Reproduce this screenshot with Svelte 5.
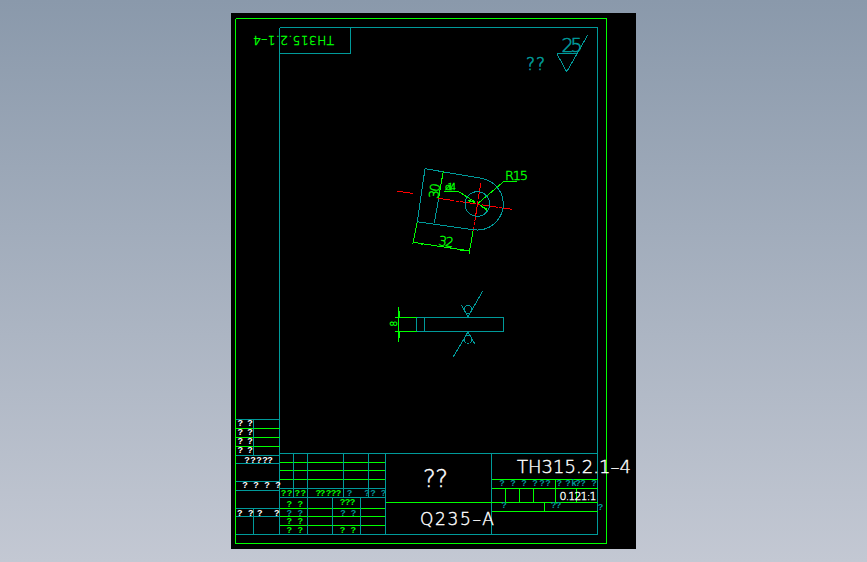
<script>
  const G = "#00ff00";
  const C = "#009a9a";
  const W = "#ffffff";

  // sheet lines as [x1, y1, x2, y2, colour], in page pixels
  const lines = [
    // outer and inner frame
    [235.5, 18.5, 606.5, 18.5, G], [606.5, 18.5, 606.5, 543.5, G], [606.5, 543.5, 235.5, 543.5, G], [235.5, 543.5, 235.5, 18.5, G],
    [279.5, 27.5, 597.5, 27.5, C], [597.5, 27.5, 597.5, 534.5, C], [597.5, 534.5, 235.5, 534.5, C], [279.5, 27.5, 279.5, 534.5, C],
    // upside-down code box
    [350.5, 27.5, 350.5, 53.5, C], [279.5, 53.5, 350.5, 53.5, C],
    // left table
    [235.5, 419.5, 279.5, 419.5, C], [235.5, 428.5, 279.5, 428.5, G], [235.5, 437.5, 279.5, 437.5, G], [235.5, 446.5, 279.5, 446.5, G],
    [235.5, 455.5, 279.5, 455.5, C], [235.5, 463.5, 279.5, 463.5, C], [235.5, 481.5, 279.5, 481.5, C], [235.5, 490.5, 279.5, 490.5, C],
    [235.5, 508.5, 279.5, 508.5, C], [235.5, 516.5, 279.5, 516.5, C],
    [253.5, 419.5, 253.5, 455.5, C], [253.5, 508.5, 253.5, 534.5, C],
    // middle table
    [279.5, 453.5, 597.5, 453.5, C], [279.5, 462.5, 385.5, 462.5, G], [279.5, 470.5, 385.5, 470.5, G], [279.5, 479.5, 385.5, 479.5, G],
    [279.5, 488.5, 385.5, 488.5, C], [279.5, 497.5, 385.5, 497.5, C], [279.5, 508.5, 385.5, 508.5, G], [279.5, 516.5, 385.5, 516.5, G],
    [279.5, 525.5, 385.5, 525.5, G],
    [293.5, 453.5, 293.5, 497.5, C], [307.5, 453.5, 307.5, 534.5, C], [343.5, 453.5, 343.5, 497.5, C], [368.5, 453.5, 368.5, 497.5, C],
    [332.5, 497.5, 332.5, 534.5, C], [360.5, 497.5, 360.5, 534.5, C], [385.5, 453.5, 385.5, 534.5, C],
    // title block, right side
    [491.5, 453.5, 491.5, 534.5, C], [385.5, 502.5, 597.5, 502.5, G],
    [491.5, 479.5, 597.5, 479.5, G], [491.5, 488.5, 597.5, 488.5, G], [491.5, 511.5, 597.5, 511.5, G],
    [505.5, 488.5, 505.5, 502.5, G], [519.5, 488.5, 519.5, 502.5, G], [533.5, 488.5, 533.5, 502.5, G],
    [555.5, 479.5, 555.5, 502.5, G], [576.5, 488.5, 576.5, 502.5, G], [544.5, 502.5, 544.5, 511.5, G],
    // part outline, top view
    [425, 168.7, 481.3, 178.3, C], [473.3, 229.7, 417.3, 221.7, C], [417.3, 221.7, 425, 168.7, C],
    [443.3, 171, 438.5, 199, G], [438.5, 199, 434.3, 223.3, C],
    // dimensions
    [417.3, 221.7, 412.7, 244.3, G], [473.3, 229.7, 469, 254, G], [413.3, 242.3, 470, 251, G],
    [504.3, 181, 516.7, 181, G], [504.3, 181, 477.3, 204, G],
    [444.3, 191, 457.7, 191, G], [457.7, 191, 475, 202, G], [480, 205, 488, 211, G],
    // part, side view
    [416.5, 317.5, 503.5, 317.5, C], [503.5, 317.5, 503.5, 331.5, C], [503.5, 331.5, 416.5, 331.5, C], [416.5, 331.5, 416.5, 317.5, C],
    [424.5, 317.5, 424.5, 331.5, C],
    [395, 317.5, 416.5, 317.5, G], [395, 331.5, 416.5, 331.5, G], [398.7, 307, 398.7, 341.7, G],
    // surface marks
    [461.3, 305, 468, 316.7, C], [468, 316.7, 482.7, 291, C],
    [468, 332, 475, 344.3, C], [468, 332, 453.3, 356.7, C],
    [556.7, 53.5, 577.7, 53.5, C], [556.7, 53.5, 566.7, 71.7, C], [566.7, 71.7, 587.7, 35, C]
  ];

  const redLines = [
    [397, 191, 414, 193.7],
    [438.3, 198.3, 511.7, 209.3],
    [480.7, 183.3, 473.3, 231]
  ];

  // solid arrow heads
  const heads = [
    "413.3,242.3 423,242.8 422.6,244.8",
    "470,251 460.5,248.5 460.2,250.5",
    "477,203.5 468.5,199.5 467.5,201",
    "480,205 487.5,208.5 486.5,210.5",
    "398,317.5 399.6,317.5 399.6,311 398,311",
    "398,331.5 399.6,331.5 399.6,338 398,338"
  ];

  // small placeholder marks in the tables: [colour, baseline y, x positions]
  const marks = [
    [W, 426, [240.3, 250]], [W, 435, [240.3, 250]], [W, 444, [240.3, 250]], [W, 453, [240.3, 250]],
    [W, 462.5, [247, 253, 259, 265, 270]],
    [W, 488, [245, 256, 267, 278]],
    [W, 515.5, [239.7, 250.7, 259.7, 276.7]],
    [G, 495.5, [283.6, 289.6, 297.3, 303.3, 318.3, 322.6, 328.6, 333.6, 338.6]],
    [C, 495.5, [349.6, 367, 373, 383.6]],
    [G, 507, [289.3, 300.3]], [G, 505, [342.6, 347.6, 352.6]],
    [C, 515.5, [289.3, 300.3, 343, 353.6]],
    [G, 524, [289.3, 300.3]],
    [G, 532.5, [289.3, 300.3, 342.6, 353.3]],
    [C, 485.5, [502, 513, 524, 535, 542, 548, 559.3, 568, 578, 583, 594]],
    [C, 508, [504, 553.5, 558.5]],
    [C, 509.5, [600.6]]
  ];
</script>

<div class="page">
  <div class="sheet">
    <svg viewBox="231 13 405 536" width="405" height="536" aria-label="Part drawing">
      {#each lines as [x1, y1, x2, y2, colour]}
        <line {x1} {y1} {x2} {y2} stroke={colour} />
      {/each}
      {#each redLines as [x1, y1, x2, y2]}
        <line {x1} {y1} {x2} {y2} stroke="#ff0000" stroke-dasharray="16 1.5 3 1.5" />
      {/each}
      <path d="M481.3 178.3A26 26 0 0 1 473.3 229.7" fill="none" stroke={C} />
      <circle cx="477.3" cy="204" r="12.3" fill="none" stroke={C} />
      <circle cx="468" cy="309.3" r="4" fill="none" stroke={C} />
      <circle cx="468" cy="339.3" r="4" fill="none" stroke={C} />
      {#each heads as points}
        <polygon {points} fill={G} />
      {/each}

      <text class="code" transform="translate(334 36) rotate(180)" textLength="81" fill={G} stroke={G}>TH315.2.1–4</text>
      <text class="rough" x="561.5" y="52" textLength="21" fill={C} stroke={C}>25</text>
      <text class="rough-q" x="526" y="70" textLength="19" fill={C} stroke={C}>??</text>

      <text class="dim" x="505" y="180" textLength="23" fill={G} stroke={G}>R15</text>
      <text class="dim-sm" x="445" y="190" textLength="11" fill={G} stroke={G}>ø14</text>
      <text class="dim" transform="translate(438 245) rotate(8.5)" textLength="15" fill={G} stroke={G}>32</text>
      <text class="dim" transform="translate(438 199) rotate(-82)" textLength="15" fill={G} stroke={G}>30</text>
      <text class="dim-sm" transform="translate(396.5 326.5) rotate(-90)" fill={G} stroke={G}>8</text>

      <text class="big" x="423" y="486.5" textLength="25" fill={W} stroke={W}>??</text>
      <text class="grade" x="420" y="525" textLength="74" fill={W} stroke={W}>Q235–A</text>
      <text class="drawing" x="517" y="473" textLength="114" fill={W} stroke={W}>TH315.2.1–4</text>
      <text class="scale" x="559.5" y="500" textLength="37" fill={W} stroke={W}>0.121:1</text>

      {#each marks as [colour, y, xs]}
        {#each xs as x}
          <text class="mark" {x} {y} fill={colour}>?</text>
        {/each}
      {/each}
      <text class="mark" x="574" y="485.5" fill={C}>k</text>
    </svg>
  </div>
</div>

<style>
  :global(body) {
    margin: 0;
  }

  .page {
    width: 867px;
    height: 562px;
    box-sizing: border-box;
    padding: 13px 231px;
    background: linear-gradient(#8a99ab, #c3c8d3);
    overflow: hidden;
  }

  .sheet {
    width: 405px;
    height: 536px;
    background: #000;
  }

  svg {
    display: block;
    shape-rendering: crispEdges;
  }

  text {
    font-family: "DejaVu Sans", "Liberation Sans", sans-serif;
    font-weight: 200;
    stroke-width: 0.4px;
  }

  .code {
    font-size: 12px;
  }

  .rough {
    font-size: 19px;
    stroke-width: 0.6px;
  }

  .rough-q {
    font-size: 17px;
    stroke-width: 0.6px;
  }

  .dim {
    font-size: 13px;
  }

  .dim-sm {
    font-size: 9px;
  }

  .big {
    font-size: 24px;
  }

  .grade {
    font-size: 17px;
  }

  .drawing {
    font-size: 18px;
  }

  .scale {
    font-size: 11px;
  }

  .mark {
    font-family: "Liberation Sans", sans-serif;
    font-size: 9px;
    font-weight: 700;
    text-anchor: middle;
  }
</style>
